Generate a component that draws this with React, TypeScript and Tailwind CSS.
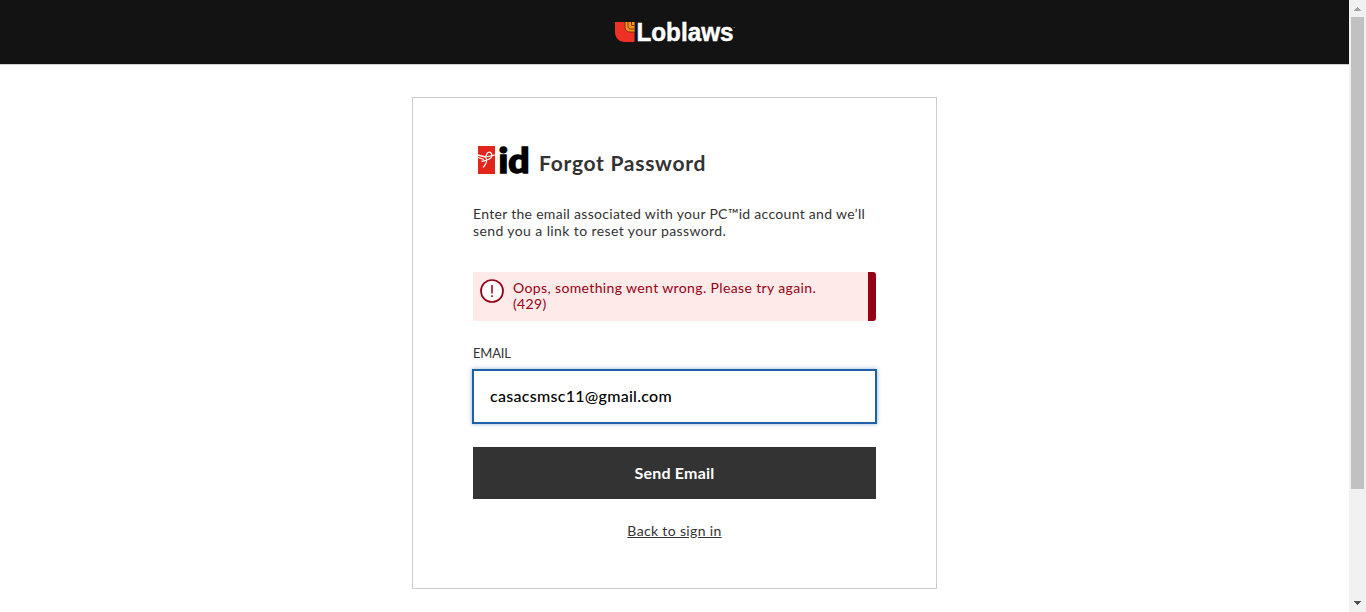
function Header() {
  return (
    <header className="flex h-[65px] shrink-0 justify-center border-b border-[#cfcfcf] bg-[#131313] pt-[21px]">
      <svg width="120" height="28" viewBox="0 0 120 28" className="block overflow-visible" role="img" aria-label="Loblaws">
        <path d="M0 1H19.5V21H10C4 21 0 17 0 11Z" fill="#ee3124" />
        <path d="M10 1H19.5V11H15C12 11 10 9 10 6Z" fill="#f7941d" />
        <path d="M10 1V6C10 9 12 11 15 11H19.5M13 1V5C13 7 14 8 16 8H19.5M16.5 1V4.500H19.5" fill="none" stroke="#6b2a12" strokeWidth="0.9" />
        <text x="21.500" y="20" textLength="97" lengthAdjust="spacingAndGlyphs" fill="#ffffff" stroke="#ffffff" strokeWidth="0.5" fontFamily="'Liberation Sans', sans-serif" fontWeight="700" fontSize="25.5">Loblaws</text>
        <circle cx="119.2" cy="6.5" r="0.6" fill="#aaaaaa" />
      </svg>
    </header>
  );
}

function IdLogo() {
  return (
    <svg width="54" height="36" viewBox="0 0 54 36" className="block shrink-0 overflow-visible" role="img" aria-label="PC id">
      <rect x="3" y="4" width="17" height="28" fill="#e1251b" />
      <path d="M2.5 13L10.5 15L12 11.500C14 9 17 10.500 17 13.500C16.500 17 13 18.500 6.500 19.500" fill="none" stroke="#ffffff" strokeWidth="1.3" />
      <path d="M10.500 15L20 13M10.500 15C12.500 18 11.500 22 8 25.500M3 15.500L9 17.500" fill="none" stroke="#ffffff" strokeWidth="1.1" />
      <text x="23.5" y="31.3" textLength="31" lengthAdjust="spacingAndGlyphs" fill="#000000" stroke="#000000" strokeWidth="1.500" fontFamily="Lato, sans-serif" fontWeight="900" fontSize="35">id</text>
    </svg>
  );
}

function Scrollbar() {
  return (
    <div className="flex h-full w-[17px] shrink-0 flex-col items-center justify-between bg-[#f1f1f1]">
      <div className="flex h-[17px] items-center justify-center">
        <svg width="7" height="4" viewBox="0 0 7 4"><path d="M3 0H4V1H5V2H6V3H7V4H0V3H1V2H2V1H3Z" fill="#a3a3a3" /></svg>
      </div>
      <div className="h-[472px] w-[13px] bg-[#c1c1c1]" />
      <div className="flex grow flex-col justify-end pb-[7px]">
        <svg width="7" height="4" viewBox="0 0 7 4"><path d="M0 0H7V1H6V2H5V3H4V4H3V3H2V2H1V1H0Z" fill="#505050" /></svg>
      </div>
    </div>
  );
}

export default function App() {
  return (
    <div className="flex h-[612px] w-[1366px] overflow-hidden bg-white font-[Lato,sans-serif] text-[#333333]">
      <div className="flex min-w-0 grow flex-col">
        <Header />
        <main className="mx-auto mt-8 h-[492px] w-[525px] shrink-0 border border-[#cccccc] px-[60px] pt-[44px]">
          <div className="flex h-[36px] pl-[2px]">
            <IdLogo />
            <h1 className="mt-[7px] ml-[10px] text-[21px] leading-[28px] font-bold tracking-[0.72px] whitespace-nowrap">Forgot Password</h1>
          </div>
          <p className="mt-[27px] text-[14px] leading-[17px] tracking-[0.3px] whitespace-nowrap">
            Enter the email associated with your PC™id account and we’ll
            <br />
            <span className="tracking-[0.4px]">send you a link to reset your password.</span>
          </p>
          <div role="alert" className="mt-[33px] flex h-[49px] rounded-r-[3px] border-r-8 border-[#960014] bg-[#ffeaea] text-[#960014]">
            <svg width="24" height="24" viewBox="0 0 24 24" className="mt-[7px] ml-[7px] shrink-0">
              <circle cx="12" cy="12" r="11" fill="#ffffff" stroke="#960014" strokeWidth="1.7" />
              <path d="M12 6V14.5M12 16.2V18" stroke="#960014" strokeWidth="1.5" />
            </svg>
            <p className="mt-[8px] ml-[9px] text-[14px] leading-[16px] tracking-[0.37px] whitespace-nowrap">
              Oops, something went wrong. Please try again.
              <br />
              (429)
            </p>
          </div>
          <label htmlFor="email" className="mt-[24px] block h-[16px] text-[13px] leading-[16px] tracking-[-0.2px]">EMAIL</label>
          <input
            id="email"
            type="email"
            defaultValue="casacsmsc11@gmail.com"
            className="-mx-px mt-[8px] block h-[55px] w-[405px] border-2 border-[#1f5fa8] bg-white px-4 pb-[2px] text-[16px] font-medium tracking-[0.29px] text-black shadow-[0_0_4px_rgba(31,95,168,0.5)] outline-none"
          />
          <button type="button" className="mt-[23px] block h-[52px] w-full bg-[#333333] text-[16px] font-bold tracking-[0.2px] text-white">Send Email</button>
          <a href="#" className="mx-auto mt-[23px] block w-fit text-[14px] leading-[18px] tracking-[0.35px] underline">Back to sign in</a>
        </main>
      </div>
      <Scrollbar />
    </div>
  );
}
